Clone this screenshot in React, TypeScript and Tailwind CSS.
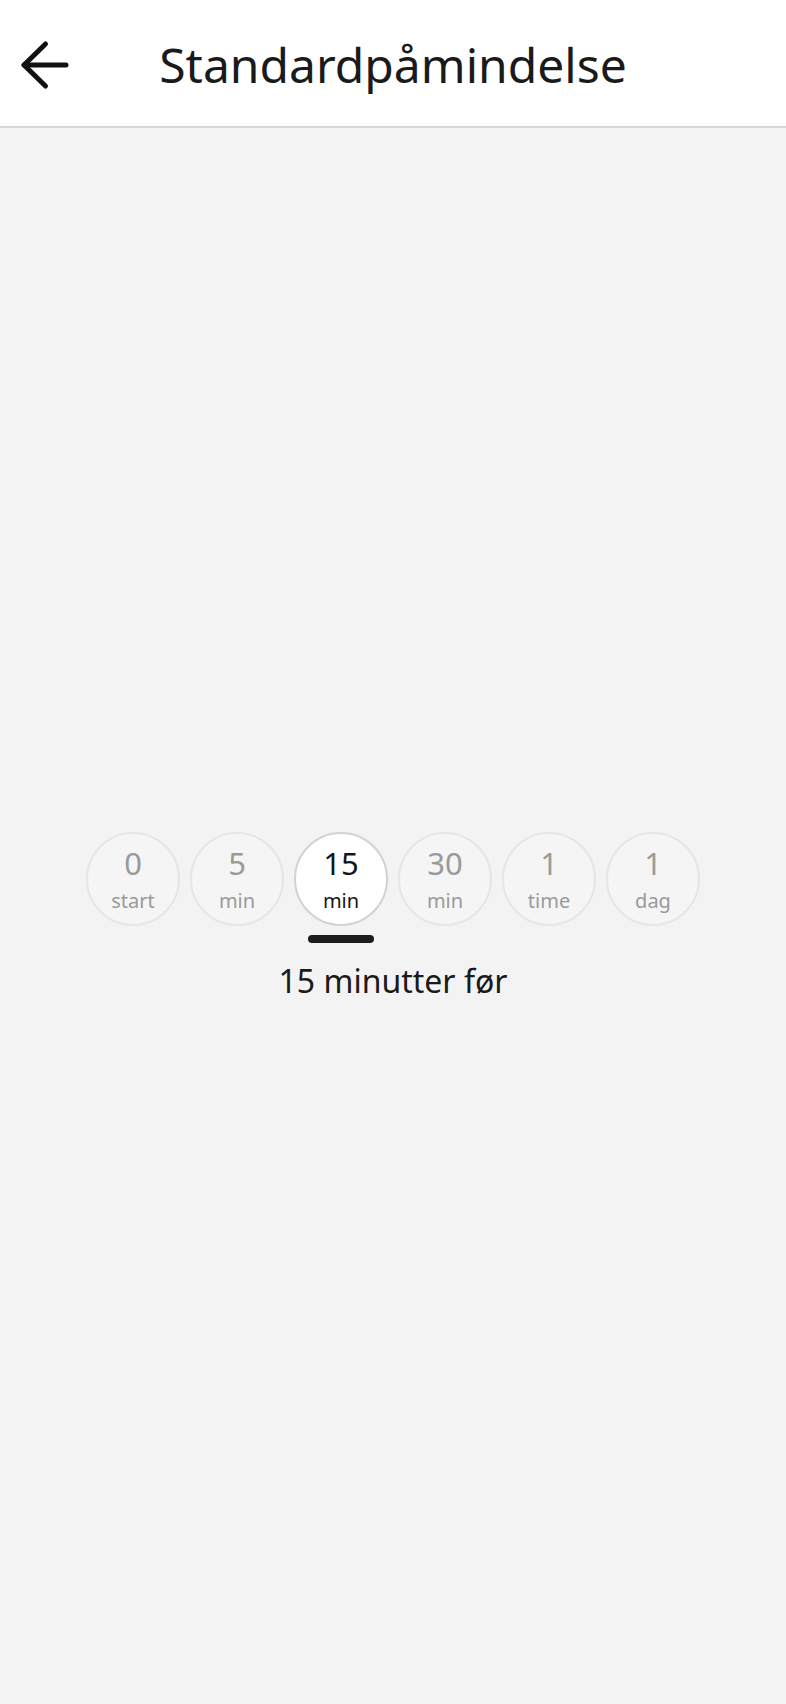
import React, { useState } from 'react';

const options = [
  { value: '0', unit: 'start', text: 'Ved start' },
  { value: '5', unit: 'min', text: '5 minutter før' },
  { value: '15', unit: 'min', text: '15 minutter før' },
  { value: '30', unit: 'min', text: '30 minutter før' },
  { value: '1', unit: 'time', text: '1 time før' },
  { value: '1', unit: 'dag', text: '1 dag før' },
];

const App: React.FC = () => {
  const [selected, setSelected] = useState(2);

  return (
    <div className="h-screen flex flex-col bg-[#f3f3f3] font-['Noto_Sans',sans-serif] text-[#1a1a1a]">
      <header className="h-[128px] shrink-0 bg-white border-b-2 border-[#d6d6d8] grid grid-cols-[1fr_auto_1fr] items-center pt-[4px]">
        <button className="ml-[20px] w-[50px] h-[50px] flex items-center justify-center" aria-label="Tilbage">
          <svg width="50" height="50" viewBox="0 0 50 50" fill="none" stroke="#111" strokeWidth="5" strokeLinecap="round" strokeLinejoin="round">
            <path d="M25.5 4 L4 25 L25.5 46" />
            <path d="M4 25 H46" />
          </svg>
        </button>
        <h1 className="text-[48px] leading-[56px] font-normal">Standardpåmindelse</h1>
        <div />
      </header>

      <main className="flex-1 flex flex-col items-center justify-center">
        <div className="flex gap-[10px]">
          {options.map((o, i) => {
            const active = i === selected;
            return (
              <div key={i} className="flex flex-col items-center gap-[9px]">
                <button
                  onClick={() => setSelected(i)}
                  className={
                    active
                      ? 'w-[94px] h-[94px] rounded-full border-2 border-[#d2d2d2] bg-white flex flex-col items-center justify-center pt-[3px] text-[#151515]'
                      : 'w-[94px] h-[94px] rounded-full border-2 border-[#e6e6e6] bg-[#f5f5f5] flex flex-col items-center justify-center pt-[3px] text-[#9a9a9a]'
                  }
                >
                  <span className="text-[31px] leading-[30px]">{o.value}</span>
                  <span className="text-[20px] leading-[24px] mt-[11px]">{o.unit}</span>
                </button>
                <div className={active ? 'w-[66px] h-[8px] rounded-full bg-[#1c1c1c]' : 'w-[66px] h-[8px]'} />
              </div>
            );
          })}
        </div>
        <p className="mt-[18px] text-[32px] leading-[40px]">{options[selected].text}</p>
      </main>
    </div>
  );
};

export default App;
